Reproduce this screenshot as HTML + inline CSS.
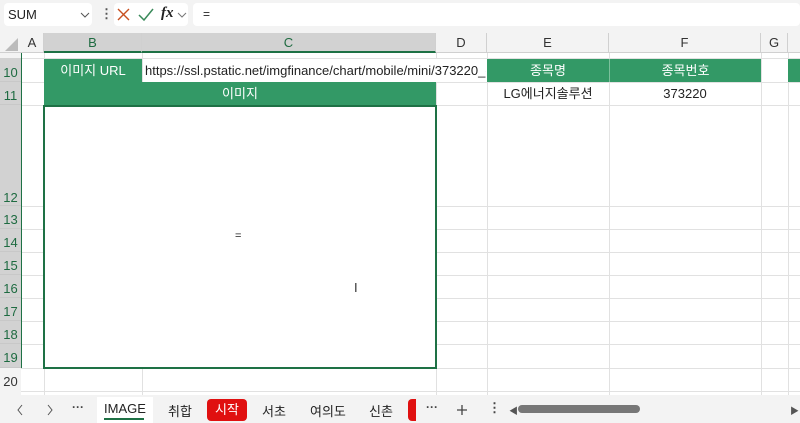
<!DOCTYPE html>
<html><head><style>
*{margin:0;padding:0;box-sizing:border-box}
body{width:800px;height:423px;overflow:hidden;background:#fff;font-family:"Liberation Sans","Noto Sans CJK KR",sans-serif;position:relative;font-size:12px;color:#222}
.a{position:absolute}
.hl{position:absolute;height:1px;background:#e1e1e1;left:21px;right:0}
.vl{position:absolute;width:1px;background:#e1e1e1;top:53px;height:342px}
.rh{position:absolute;left:0;width:21px;text-align:center;font-size:13px;color:#1e6b41;background:#d2d2d2;border-bottom:1px solid #c8c8c8}
.ch{position:absolute;top:33px;height:20px;text-align:center;font-size:13px;line-height:20px;color:#333;border-right:1px solid #d0d0d0}
.g{background:#339966;color:#fff;text-align:center;position:absolute;font-size:13px}
</style></head><body>
<div class="a" style="left:0;top:0;width:800px;height:33px;background:#f3f3f3"></div>
<div class="a" style="left:4px;top:3px;width:88px;height:23px;background:#fff;border-radius:4px;font-size:13px;line-height:23px;padding-left:4px">SUM</div>
<svg class="a" style="left:80px;top:12px" width="10" height="6"><path d="M1 1L5 5L9 1" stroke="#555" fill="none"/></svg>
<div class="a" style="left:100px;top:6px;font-size:13px;color:#555;font-weight:bold">&#8942;</div>
<div class="a" style="left:114px;top:3px;width:74px;height:23px;background:#fff;border-radius:4px"></div>
<svg class="a" style="left:117px;top:8px" width="14" height="14"><path d="M1 1L12 12M12 1L1 12" stroke="#c85020" stroke-width="1.4"/></svg>
<svg class="a" style="left:138px;top:8px" width="16" height="14"><path d="M1 7L6 12L15 1" stroke="#3a8a5a" stroke-width="1.5" fill="none"/></svg>
<div class="a" style="left:161px;top:5px;font-size:15px;font-style:italic;font-family:'Liberation Serif',serif;font-weight:bold">fx</div>
<svg class="a" style="left:177px;top:12px" width="10" height="6"><path d="M1 1L5 5L9 1" stroke="#777" fill="none"/></svg>
<div class="a" style="left:193px;top:3px;width:607px;height:23px;background:#fff;border-radius:4px;line-height:23px;padding-left:10px;font-size:12px">=</div>
<div class="a" style="left:0;top:33px;width:800px;height:20px;background:#f3f3f3;border-bottom:1px solid #d0d0d0"></div>
<div class="a" style="left:5px;top:38px;width:0;height:0;border-left:13px solid transparent;border-bottom:13px solid #bbb"></div>
<div class="ch" style="left:21px;width:23px">A</div>
<div class="ch" style="left:44px;width:98px;background:#d2d2d2;color:#1e6b41;border-bottom:2px solid #1e7145">B</div>
<div class="ch" style="left:142px;width:294px;background:#d2d2d2;color:#1e6b41;border-bottom:2px solid #1e7145">C</div>
<div class="ch" style="left:436px;width:51px">D</div>
<div class="ch" style="left:487px;width:122px">E</div>
<div class="ch" style="left:609px;width:152px">F</div>
<div class="ch" style="left:761px;width:27px">G</div>
<div class="hl" style="top:82px"></div><div class="hl" style="top:105px"></div><div class="hl" style="top:206px"></div><div class="hl" style="top:229px"></div><div class="hl" style="top:252px"></div><div class="hl" style="top:275px"></div><div class="hl" style="top:298px"></div><div class="hl" style="top:321px"></div><div class="hl" style="top:344px"></div><div class="hl" style="top:368px"></div><div class="hl" style="top:391px"></div><div class="hl" style="top:58px"></div>
<div class="vl" style="left:44px"></div><div class="vl" style="left:142px"></div><div class="vl" style="left:436px"></div><div class="vl" style="left:487px"></div><div class="vl" style="left:609px"></div><div class="vl" style="left:761px"></div><div class="vl" style="left:788px"></div>
<div class="a" style="left:0;top:53px;width:21px;height:342px;background:#f3f3f3"></div>
<div class="rh" style="top:58px;height:24px;line-height:30px">10</div>
<div class="rh" style="top:82px;height:23px;line-height:28px">11</div>
<div class="rh" style="top:105px;height:101px;line-height:186px">12</div>
<div class="rh" style="top:206px;height:23px;line-height:28px">13</div>
<div class="rh" style="top:229px;height:23px;line-height:28px">14</div>
<div class="rh" style="top:252px;height:23px;line-height:28px">15</div>
<div class="rh" style="top:275px;height:23px;line-height:28px">16</div>
<div class="rh" style="top:298px;height:23px;line-height:28px">17</div>
<div class="rh" style="top:321px;height:23px;line-height:28px">18</div>
<div class="rh" style="top:344px;height:24px;line-height:28px">19</div>
<div class="a" style="left:0;top:368px;width:21px;height:23px;line-height:28px;text-align:center;color:#333;background:#f3f3f3;font-size:13px">20</div>
<div class="a" style="left:21px;top:53px;width:1px;height:315px;background:#1e7145"></div>
<div class="g" style="left:44px;top:59px;width:98px;height:23px;line-height:23px">이미지 URL</div>
<div class="a" style="left:145px;top:59px;width:341px;height:23px;line-height:23px;overflow:hidden;white-space:nowrap;font-size:13px;background:#fff">https://ssl.pstatic.net/imgfinance/chart/mobile/mini/373220_en</div>
<div class="g" style="left:487px;top:59px;width:274px;height:23px;line-height:23px"><span style="position:absolute;left:0;width:122px">종목명</span><span style="position:absolute;left:122px;width:152px;border-left:1px solid #7cc09c">종목번호</span></div>
<div class="a" style="left:788px;top:59px;width:12px;height:23px;background:#339966"></div>
<div class="g" style="left:44px;top:82px;width:392px;height:24px;line-height:23px">이미지</div>
<div class="a" style="left:487px;top:83px;width:122px;height:22px;line-height:22px;text-align:center;font-size:13px">LG에너지솔루션</div>
<div class="a" style="left:609px;top:83px;width:152px;height:22px;line-height:22px;text-align:center;font-size:13px">373220</div>
<div class="a" style="left:43px;top:105px;width:394px;height:264px;border:2px solid #1e7145;background:#fff"></div>
<div class="a" style="left:235px;top:230px;font-size:11px">=</div>
<div class="a" style="left:354px;top:280px;font-size:13px;color:#333">I</div>
<div class="a" style="left:0;top:395px;width:800px;height:28px;background:#f3f3f3"></div>
<svg class="a" style="left:16px;top:404px" width="8" height="12"><path d="M6 1L2 6L6 11" stroke="#555" fill="none"/></svg>
<svg class="a" style="left:46px;top:404px" width="8" height="12"><path d="M2 1L6 6L2 11" stroke="#555" fill="none"/></svg>
<div class="a" style="top:400px;left:72px;font-size:12px;color:#444;font-weight:bold">&middot;&middot;&middot;</div>
<div class="a" style="top:397px;left:97px;width:56px;height:26px;background:#fff"></div>
<div class="a" style="top:401px;left:104px;font-size:13px;color:#222">IMAGE</div>
<div class="a" style="top:418px;left:104px;width:40px;height:2px;background:#1e7145"></div>
<div class="a" style="top:401px;left:168px;font-size:13px">취합</div>
<div class="a" style="top:399px;left:207px;width:40px;height:22px;background:#e01010;border-radius:4px;color:#fff;text-align:center;line-height:22px;font-size:13px">시작</div>
<div class="a" style="top:401px;left:262px;font-size:13px">서초</div>
<div class="a" style="top:401px;left:310px;font-size:13px">여의도</div>
<div class="a" style="top:401px;left:369px;font-size:13px">신촌</div>
<div class="a" style="top:399px;left:408px;width:8px;height:22px;background:#e01010;border-radius:4px 0 0 4px"></div>
<div class="a" style="top:400px;left:426px;font-size:12px;color:#444;font-weight:bold">&middot;&middot;&middot;</div>
<svg class="a" style="left:456px;top:404px" width="12" height="12"><path d="M6 1V11M1 6H11" stroke="#444" stroke-width="1.3"/></svg>
<div class="a" style="top:400px;left:488px;font-size:13px;color:#444;font-weight:bold">&#8942;</div>
<div class="a" style="top:404px;left:509px;font-size:9px;color:#555">&#9664;</div>
<div class="a" style="top:405px;left:518px;width:122px;height:8px;background:#777;border-radius:4px"></div>
<div class="a" style="top:404px;left:790px;font-size:9px;color:#555">&#9654;</div>
</body></html>
